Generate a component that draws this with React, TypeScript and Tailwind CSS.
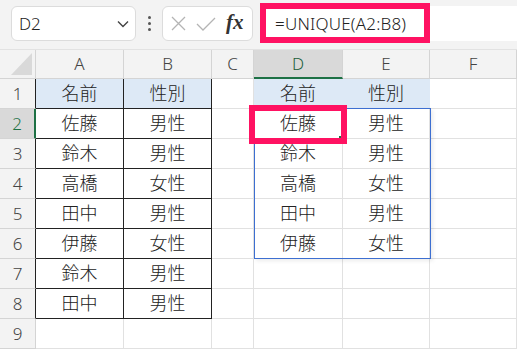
import React from "react";

const COLS = "grid-cols-[36px_88px_88px_42px_89px_87px_87px]";
const FONT = { fontFamily: '"Noto Sans", "Noto Sans CJK JP", sans-serif' };

const LEFT: [string, string][] = [
  ["名前", "性別"],
  ["佐藤", "男性"],
  ["鈴木", "男性"],
  ["高橋", "女性"],
  ["田中", "男性"],
  ["伊藤", "女性"],
  ["鈴木", "男性"],
  ["田中", "男性"],
];

const RIGHT: [string, string][] = [
  ["名前", "性別"],
  ["佐藤", "男性"],
  ["鈴木", "男性"],
  ["高橋", "女性"],
  ["田中", "男性"],
  ["伊藤", "女性"],
];

const LETTERS = ["A", "B", "C", "D", "E", "F"];

function Toolbar() {
  return (
    <div className="h-[50px] bg-[#f3f3f3] flex items-start pt-[6px] pl-[11px] border-b border-[#e2e2e2]">
      {/* name box */}
      <div className="w-[125px] h-[35px] bg-white rounded-[6px] border border-[#dcdcdc] flex items-center pl-[7px] pr-[6px]">
        <span className="text-[17px] font-light text-[#222] flex-1">D2</span>
        <svg width="12" height="8" viewBox="0 0 12 8" fill="none" stroke="#444" strokeWidth="1.4">
          <path d="M1 1.5 L6 6.5 L11 1.5" />
        </svg>
      </div>
      {/* vertical dots */}
      <div className="w-[26px] h-[35px] flex flex-col items-center justify-center gap-[3px]">
        <span className="w-[3px] h-[3px] bg-[#555] rounded-full" />
        <span className="w-[3px] h-[3px] bg-[#555] rounded-full" />
        <span className="w-[3px] h-[3px] bg-[#555] rounded-full" />
      </div>
      {/* cancel / enter / fx */}
      <div className="w-[91px] h-[35px] bg-white rounded-[6px] border border-[#dcdcdc] flex items-center pl-[8px] gap-[10px]">
        <svg width="15" height="15" viewBox="0 0 15 15" stroke="#b4b4b4" strokeWidth="1.3">
          <path d="M1 1 L14 14 M14 1 L1 14" />
        </svg>
        <svg width="20" height="14" viewBox="0 0 20 14" fill="none" stroke="#b4b4b4" strokeWidth="1.3">
          <path d="M1 7 L7 13 L19 1" />
        </svg>
        <span
          className="text-[21px] italic font-bold text-[#333] leading-none -mt-[2px]"
          style={{ fontFamily: '"Liberation Serif", "DejaVu Serif", serif' }}
        >
          fx
        </span>
      </div>
      {/* formula input */}
      <div className="relative flex-1 ml-[7px] h-[35px] bg-white flex items-center pl-[15px]">
        <span className="text-[17px] font-light text-[#222] tracking-[0.2px]">=UNIQUE(A2:B8)</span>
        <div className="absolute left-0 -top-[3px] w-[170px] h-[40px] border-[6px] border-[#ff1262]" />
      </div>
    </div>
  );
}

function HeaderRow() {
  return (
    <div className={`grid ${COLS} h-[29px] font-light`}>
      <div className="bg-[#f3f3f3] border-r border-b border-[#d4d4d4] flex items-end justify-end pr-[3px] pb-[3px]">
        <svg width="21" height="22" viewBox="0 0 21 22">
          <path d="M21 0 L21 22 L0 22 Z" fill="#d9d9d9" />
        </svg>
      </div>
      {LETTERS.map((l) => {
        const sel = l === "D";
        return (
          <div
            key={l}
            className={
              sel
                ? "bg-[#d9d9d9] border-r border-[#d4d4d4] border-b-2 border-b-[#1e7145] flex items-center justify-center text-[17px] text-[#1b5e3a]"
                : "bg-[#f3f3f3] border-r border-b border-[#d4d4d4] flex items-center justify-center text-[17px] text-[#444]"
            }
          >
            {l}
          </div>
        );
      })}
    </div>
  );
}

function Row({ n }: { n: number }) {
  const left = LEFT[n - 1];
  const right = RIGHT[n - 1];
  const inTable = !!left;
  const rowSel = n === 2;
  const headCls = rowSel
    ? "bg-[#d9d9d9] border-r-2 border-r-[#1e7145] border-b border-b-[#d4d4d4] text-[#1e7145]"
    : inTable
    ? "bg-[#f3f3f3] border-r border-r-[#222] border-b border-b-[#d4d4d4] text-[#444]"
    : "bg-[#f3f3f3] border-r border-r-[#d4d4d4] border-b border-b-[#d4d4d4] text-[#444]";
  const tblCell = (blue: boolean) =>
    `${blue ? "bg-[#dde9f6]" : "bg-white"} border-r border-b border-[#222] flex items-center justify-center`;
  const plain = "bg-white border-r border-b border-[#e1e1e1] flex items-center justify-center";
  const headBlue = "bg-[#dde9f6] border-r border-r-[#dde9f6] border-b border-b-[#dde9f6] flex items-center justify-center";
  return (
    <div className={`grid ${COLS} h-[30px] text-[18px] font-light text-[#222]`}>
      <div className={`${headCls} flex items-center justify-center text-[17px]`}>{n}</div>
      <div className={inTable ? tblCell(n === 1) : plain}>{left?.[0]}</div>
      <div className={inTable ? tblCell(n === 1) : plain}>{left?.[1]}</div>
      <div className={plain} />
      <div className={n === 1 ? headBlue : plain}>{right?.[0]}</div>
      <div className={n === 1 ? headBlue : plain}>{right?.[1]}</div>
      <div className={plain} />
    </div>
  );
}

export default function App() {
  return (
    <div className="relative w-[517px] h-[349px] overflow-hidden bg-white" style={FONT}>
      <Toolbar />
      <HeaderRow />
      {Array.from({ length: 9 }, (_, i) => (
        <Row key={i} n={i + 1} />
      ))}
      {/* spill range border */}
      <div className="absolute left-[254px] top-[108px] w-[177px] h-[151px] border border-[#3d6fd1] shadow-[2px_2px_4px_rgba(0,0,0,0.08)] pointer-events-none" />
      {/* fill handle */}
      <div className="absolute left-[339px] top-[136px] w-[3px] h-[3px] bg-[#1e7145]" />
      {/* callout on D2 */}
      <div className="absolute left-[249px] top-[105px] w-[98px] h-[39px] border-[6px] border-[#ff1262]" />
    </div>
  );
}
